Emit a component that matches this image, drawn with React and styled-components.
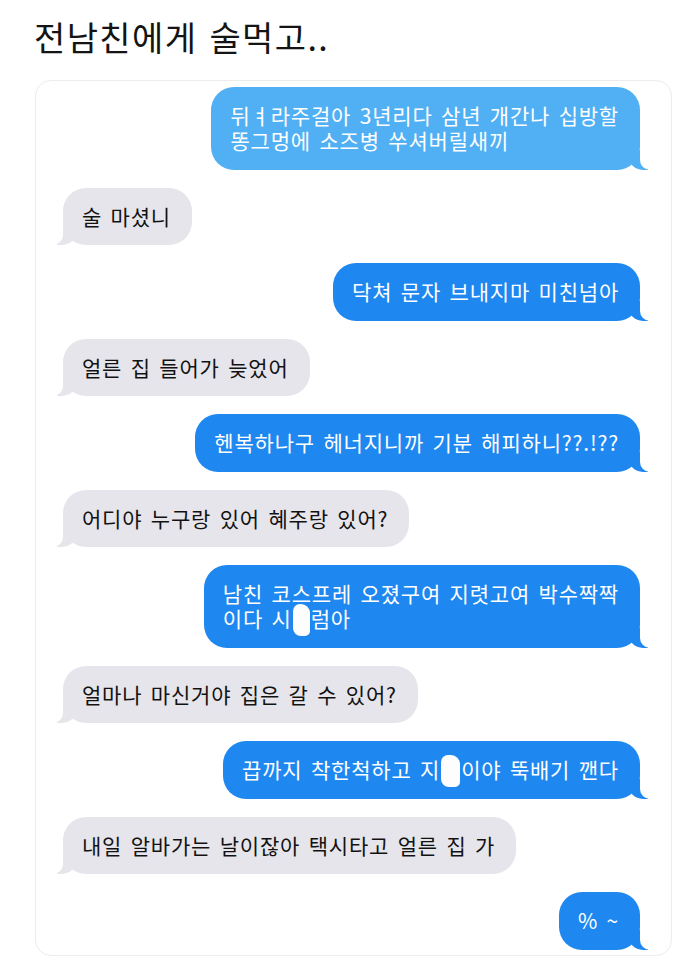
import React from "react";
import styled, { createGlobalStyle } from "styled-components";

const GlobalStyle = createGlobalStyle`
  body {
    margin: 0;
    background: #fff;
    font-family: "Noto Sans CJK KR", "Noto Sans", sans-serif;
  }
`;

const Page = styled.div`
  width: 682px;
  height: 960px;
  overflow: hidden;
  background: #fff;
`;

const Title = styled.h1`
  margin: 0;
  padding: 16px 0 0 34px;
  height: 80px;
  box-sizing: border-box;
  font-size: 34px;
  line-height: 42px;
  font-weight: 400;
  letter-spacing: 1.4px;
  word-spacing: 3px;
  color: #141414;
`;

const Card = styled.div`
  margin-left: 35px;
  width: 637px;
  height: 876px;
  box-sizing: border-box;
  border: 1px solid #ececec;
  border-radius: 16px;
  padding: 6px 31px 0 27px;
  display: flex;
  flex-direction: column;
  gap: 18px;
  background: #fff;
`;

const Bubble = styled.div`
  position: relative;
  align-self: ${(p) => (p.$me ? "flex-end" : "flex-start")};
  padding: 16px 21px 16.5px 19px;
  border-radius: 23px;
  font-size: 21px;
  line-height: 25px;
  letter-spacing: 0.8px;
  word-spacing: 3px;
  white-space: nowrap;
  background: ${(p) => (p.$me ? (p.$light ? "#51b0f4" : "#1e88f0") : "#e6e5eb")};
  color: ${(p) => (p.$me ? "#fff" : "#121212")};

  &::before {
    content: "";
    position: absolute;
    bottom: 0;
    width: 20px;
    height: 20px;
    background: inherit;
    ${(p) =>
      p.$me
        ? "right: -8px; border-bottom-left-radius: 15px;"
        : "left: -6px; border-bottom-right-radius: 15px;"}
  }

  &::after {
    content: "";
    position: absolute;
    bottom: 0;
    width: 10px;
    height: 20px;
    background: #fff;
    ${(p) =>
      p.$me
        ? "right: -10px; border-bottom-left-radius: 10px;"
        : "left: -10px; border-bottom-right-radius: 10px;"}
  }
`;

// white blob someone painted over a bad word
const Redact = styled.span`
  display: inline-block;
  width: ${(p) => p.$w || 18}px;
  height: 32px;
  margin: -7px 1px -5px;
  vertical-align: -4px;
  background: #fdfdfd;
  border-radius: 7px 9px 5px 8px;
`;

const messages = [
  { me: true, light: true, text: ["뒤ㅕ라주걸아 3년리다 삼년 개간나 십방할", "똥그멍에 소즈병 쑤셔버릴새끼"] },
  { me: false, text: ["술 마셨니"] },
  { me: true, text: ["닥쳐 문자 브내지마 미친넘아"] },
  { me: false, text: ["얼른 집 들어가 늦었어"] },
  { me: true, text: ["헨복하나구 헤너지니까 기분 해피하니??.!??"] },
  { me: false, text: ["어디야 누구랑 있어 혜주랑 있어?"] },
  {
    me: true,
    text: [
      "남친 코스프레 오졌구여 지렷고여 박수짝짝",
      <>
        이다 시<Redact $w={17} />럼아
      </>,
    ],
  },
  { me: false, text: ["얼마나 마신거야 집은 갈 수 있어?"] },
  {
    me: true,
    text: [
      <>
        끕까지 착한척하고 지<Redact $w={19} />이야 뚝배기 깬다
      </>,
    ],
  },
  { me: false, text: ["내일 알바가는 날이잖아 택시타고 얼른 집 가"] },
  { me: true, text: ["% ~"] },
];

export default function App() {
  return (
    <Page>
      <GlobalStyle />
      <Title>전남친에게 술먹고..</Title>
      <Card>
        {messages.map((m, i) => (
          <Bubble key={i} $me={m.me} $light={m.light}>
            {m.text.map((line, j) => (
              <React.Fragment key={j}>
                {j > 0 && <br />}
                {line}
              </React.Fragment>
            ))}
          </Bubble>
        ))}
      </Card>
    </Page>
  );
}
